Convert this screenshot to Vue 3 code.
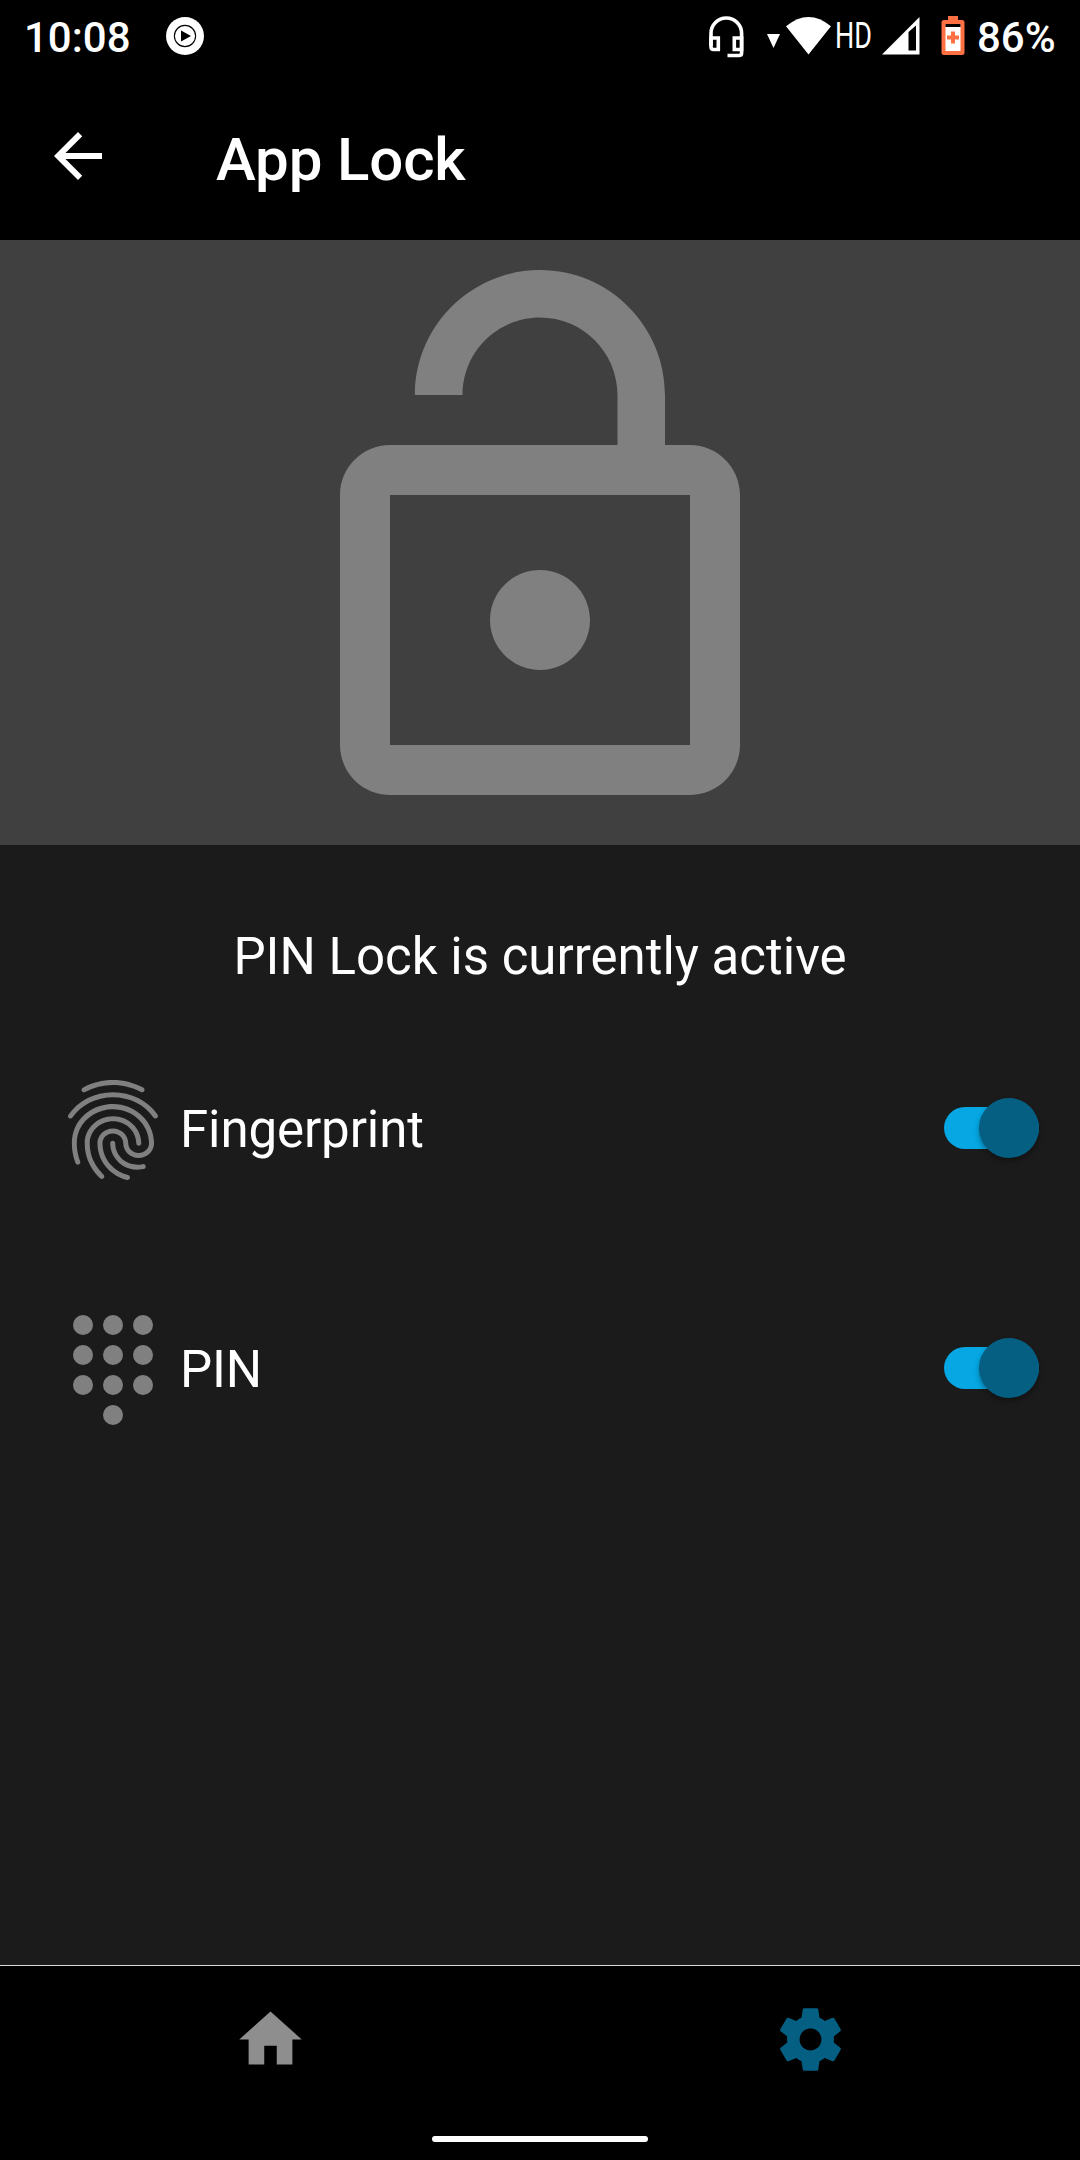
<script setup>
import { ref } from 'vue'

const fingerprintPath =
  'M17.81 4.47c-.08 0-.16-.02-.23-.06C15.66 3.42 14 3 12.01 3c-1.98 0-3.86.47-5.57 1.41-.24.13-.54.04-.68-.2-.13-.24-.04-.55.2-.68C7.82 2.52 9.86 2 12.01 2c2.13 0 3.99.47 6.03 1.52.25.13.34.43.21.67-.09.18-.26.28-.44.28zM3.5 9.72c-.1 0-.2-.03-.29-.09-.23-.16-.28-.47-.12-.7.99-1.4 2.25-2.5 3.75-3.27C9.98 4.04 14 4.03 17.15 5.65c1.5.77 2.76 1.86 3.75 3.25.16.22.11.54-.12.7-.23.16-.54.11-.7-.12-.9-1.26-2.04-2.25-3.39-2.94-2.87-1.47-6.54-1.47-9.4.01-1.36.7-2.5 1.7-3.4 2.96-.08.14-.23.21-.39.21zm6.25 12.07c-.13 0-.26-.05-.35-.15-.87-.87-1.34-1.43-2.01-2.64-.69-1.23-1.05-2.73-1.05-4.34 0-2.97 2.54-5.39 5.66-5.39s5.66 2.42 5.66 5.39c0 .28-.22.5-.5.5s-.5-.22-.5-.5c0-2.42-2.09-4.39-4.66-4.39-2.57 0-4.66 1.97-4.66 4.39 0 1.44.32 2.77.93 3.85.64 1.15 1.08 1.64 1.85 2.42.19.2.19.51 0 .71-.11.1-.24.15-.37.15zm7.17-1.85c-1.19 0-2.24-.3-3.1-.89-1.49-1.01-2.38-2.65-2.38-4.39 0-.28.22-.5.5-.5s.5.22.5.5c0 1.41.72 2.74 1.94 3.56.71.48 1.54.71 2.54.71.24 0 .64-.03 1.04-.1.27-.05.53.13.58.41.05.27-.13.53-.41.58-.57.11-1.07.12-1.21.12zM14.91 22c-.04 0-.09-.01-.13-.02-1.59-.44-2.63-1.03-3.72-2.1-1.4-1.39-2.17-3.24-2.17-5.22 0-1.62 1.38-2.94 3.08-2.94 1.7 0 3.08 1.32 3.08 2.94 0 1.07.93 1.94 2.08 1.94s2.08-.87 2.08-1.94c0-3.77-3.25-6.83-7.25-6.83-2.84 0-5.44 1.58-6.61 4.03-.39.81-.59 1.76-.59 2.8 0 .78.07 2.01.67 3.61.1.26-.03.55-.29.64-.26.1-.55-.04-.64-.29-.49-1.31-.73-2.61-.73-3.96 0-1.2.23-2.29.68-3.24 1.33-2.79 4.28-4.6 7.51-4.6 4.55 0 8.25 3.51 8.25 7.83 0 1.62-1.38 2.94-3.08 2.94s-3.08-1.32-3.08-2.94c0-1.07-.93-1.94-2.08-1.94s-2.08.87-2.08 1.94c0 1.71.66 3.31 1.87 4.51.95.94 1.86 1.46 3.27 1.85.27.07.42.35.35.61-.05.23-.26.38-.47.38z'

const dot = (x, y) => `M${x - 2} ${y}a2 2 0 1 0 4 0a2 2 0 1 0 -4 0z`
const dialpadPath = [3, 9, 15]
  .flatMap((y) => [6, 12, 18].map((x) => dot(x, y)))
  .concat(dot(12, 21))
  .join('')

const methods = ref([
  { label: 'Fingerprint', icon: fingerprintPath, on: true },
  { label: 'PIN', icon: dialpadPath, on: true },
])
</script>

<template>
  <div class="screen">
    <div class="status">
      <span class="clock">10:08</span>
      <svg class="music" width="38" height="38" viewBox="0 0 38 38">
        <circle cx="19" cy="19" r="19" fill="#fff" />
        <circle cx="19" cy="19" r="10.6" fill="none" stroke="#000" stroke-width="1.1" />
        <path d="M15 13.4v11.2l10-5.6z" fill="#000" />
      </svg>
      <span class="spacer"></span>
      <svg class="headset" width="35" height="42" viewBox="0 0 35 42" fill="none" stroke="#fff" stroke-width="3.6">
        <path d="M2 30V17.300a15.300 15.300 0 0 1 30.600 0V37q0 2.500-2.500 2.500H18.500" />
        <path d="M2 22h7.300v11.500H4.500Q2 33.500 2 31zM32.600 22h-7.300v11.500h7.300z" />
      </svg>
      <svg class="activity" width="13" height="14" viewBox="0 0 13 14"><path d="M0 0h13L6.5 14z" fill="#fff" /></svg>
      <svg class="wifi" width="46" height="38" viewBox="0 0 46 38"><path d="M0 9.300Q22.500-9.300 45 9.300L22.500 37.500z" fill="#fff" /></svg>
      <span class="hd"><span>HD</span></span>
      <svg class="signal" width="38" height="38" viewBox="0 0 38 38">
        <path fill-rule="evenodd" d="M0 37.500L37.500 0v37.500zM26.500 15v18.500h7.500V8.500z" fill="#fff" />
      </svg>
      <svg class="battery" width="24" height="39" viewBox="0 0 24 39">
        <path d="M7 0h10v4h4q2.500 0 2.500 2.500v30Q23.500 39 21 39H3Q.5 39 .5 36.500v-30Q.5 4 3 4h4z" fill="#ff7043" />
        <path d="M4.500 8h15v27h-15z" fill="#fff" />
        <path d="M4.500 8h15v3h-15z" fill="#000" />
        <path d="M10 15.500h4v4h4v4h-4v4h-4v-4H6v-4h4z" fill="#ff7043" />
      </svg>
      <span class="percent">86%</span>
    </div>

    <header class="appbar">
      <svg class="back" viewBox="0 0 24 24"><path d="M20 11H7.830l5.590-5.590L12 4l-8 8 8 8 1.410-1.410L7.830 13H20v-2z" /></svg>
      <h1>App Lock</h1>
    </header>

    <section class="hero">
      <svg viewBox="0 0 24 24">
        <path d="M12 17c1.100 0 2-.9 2-2s-.9-2-2-2-2 .9-2 2 .9 2 2 2zm6-9h-1V6c0-2.760-2.240-5-5-5S7 3.240 7 6h1.900c0-1.710 1.390-3.100 3.100-3.100 1.710 0 3.100 1.390 3.100 3.100v2H6c-1.100 0-2 .9-2 2v10c0 1.100.9 2 2 2h12c1.100 0 2-.9 2-2V10c0-1.100-.9-2-2-2zm0 12H6V10h12v10z" />
      </svg>
    </section>

    <main>
      <p class="message">PIN Lock is currently active</p>
      <div v-for="m in methods" :key="m.label" class="row">
        <svg class="method-icon" viewBox="0 0 24 24"><path :d="m.icon" /></svg>
        <span class="label">{{ m.label }}</span>
        <button class="switch" :class="{ on: m.on }" role="switch" :aria-checked="m.on" :aria-label="m.label" @click="m.on = !m.on">
          <span class="knob"></span>
        </button>
      </div>
    </main>

    <footer>
      <nav>
        <a class="tab">
          <svg viewBox="0 0 24 24"><path d="M10 20v-6h4v6h5v-8h3L12 3 2 12h3v8z" /></svg>
        </a>
        <a class="tab active">
          <svg viewBox="0 0 24 24"><path d="M19.430 12.980c.04-.32.07-.64.07-.98s-.03-.66-.07-.98l2.110-1.650c.19-.15.24-.42.12-.64l-2-3.460c-.12-.22-.39-.3-.61-.22l-2.490 1c-.52-.4-1.080-.73-1.690-.98l-.38-2.650C14.460 2.180 14.250 2 14 2h-4c-.25 0-.46.18-.49.42l-.38 2.650c-.61.25-1.170.59-1.690.98l-2.490-1c-.23-.09-.49 0-.61.22l-2 3.460c-.13.22-.07.49.12.64l2.110 1.650c-.04.32-.07.65-.07.98s.03.66.07.98l-2.110 1.650c-.19.15-.24.42-.12.64l2 3.460c.12.22.39.3.61.22l2.490-1c.52.4 1.080.73 1.690.98l.38 2.650c.03.24.24.42.49.42h4c.25 0 .46-.18.49-.42l.38-2.650c.61-.25 1.170-.59 1.690-.98l2.490 1c.23.09.49 0 .61-.22l2-3.460c.12-.22.07-.49-.12-.64l-2.110-1.650zM12 15.500c-1.930 0-3.500-1.570-3.500-3.500s1.570-3.500 3.500-3.500 3.500 1.570 3.500 3.500-1.570 3.500-3.500 3.500z" /></svg>
        </a>
      </nav>
      <div class="gesture"></div>
    </footer>
  </div>
</template>

<style>
body {
  background: #1b1b1b;
}
</style>

<style scoped>
.screen {
  display: flex;
  flex-direction: column;
  width: 1080px;
  height: 2160px;
  overflow: hidden;
  background: #1b1b1b;
  color: #fff;
  font-family: Roboto, 'Liberation Sans', sans-serif;
}
svg {
  display: block;
  flex: none;
}
.status {
  display: flex;
  align-items: flex-start;
  height: 72px;
  flex: none;
  background: #000;
  font-size: 42px;
  font-weight: 500;
  line-height: 50px;
}
.clock {
  width: 142px;
  padding: 13px 0 0 24px;
}
.music { margin-top: 17px; }
.spacer { flex: 1; }
.headset { margin: 16px 23px 0 0; }
.activity { margin: 34px 6px 0 0; }
.wifi { margin: 17px 3px 0 0; }
.hd {
  width: 35px;
  margin: 15px 12px 0 0;
  font-size: 36px;
  font-weight: 400;
  line-height: 42px;
}
.hd span {
  display: inline-block;
  transform: scaleX(.75);
  transform-origin: left;
}
.signal { margin: 17px 21px 0 0; }
.battery { margin: 16px 12px 0 0; }
.percent {
  width: 103px;
  padding-top: 13px;
}
.appbar {
  display: flex;
  align-items: center;
  height: 168px;
  flex: none;
  background: #000;
}
.back {
  width: 72px;
  height: 72px;
  margin: 0 102px 0 42px;
  fill: #fff;
}
h1 {
  margin: 8px 0 0;
  font-size: 60px;
  font-weight: 500;
  line-height: 70px;
  letter-spacing: -.15px;
}
.hero {
  display: flex;
  justify-content: center;
  align-items: flex-end;
  height: 605px;
  flex: none;
  background: #404040;
}
.hero svg {
  width: 600px;
  height: 600px;
  fill: #808080;
}
main {
  flex: 1;
}
.message {
  margin: 81px 0 62px;
  text-align: center;
  font-size: 51px;
  line-height: 62px;
}
.row {
  display: flex;
  align-items: center;
  height: 160px;
  margin-bottom: 80px;
  padding: 0 41px 0 53px;
}
.method-icon {
  width: 120px;
  height: 120px;
  fill: #808080;
}
.label {
  flex: 1;
  padding-left: 7px;
  font-size: 51px;
  line-height: 62px;
  letter-spacing: -.1px;
}
.switch {
  display: flex;
  align-items: center;
  width: 95px;
  height: 42px;
  margin: 0 0 5px;
  padding: 0;
  border: 0;
  border-radius: 21px;
  background: #555;
}
.switch.on {
  justify-content: flex-end;
  background: #06a7e2;
}
.knob {
  width: 60px;
  height: 60px;
  flex: none;
  border-radius: 50%;
  background: #055f82;
  box-shadow: 0 3px 5px rgba(0, 0, 0, .35);
}
footer {
  height: 194px;
  flex: none;
  border-top: 1px solid #d8d8d8;
  background: #000;
}
nav {
  display: flex;
  padding-top: 36px;
}
.tab {
  display: flex;
  flex: 1;
  justify-content: center;
}
.tab svg {
  width: 75px;
  height: 75px;
  fill: #8e8e8f;
}
.tab.active svg {
  fill: #055f82;
}
.gesture {
  width: 216px;
  height: 6px;
  margin: 59px auto 0;
  border-radius: 3px;
  background: #fff;
}
</style>
